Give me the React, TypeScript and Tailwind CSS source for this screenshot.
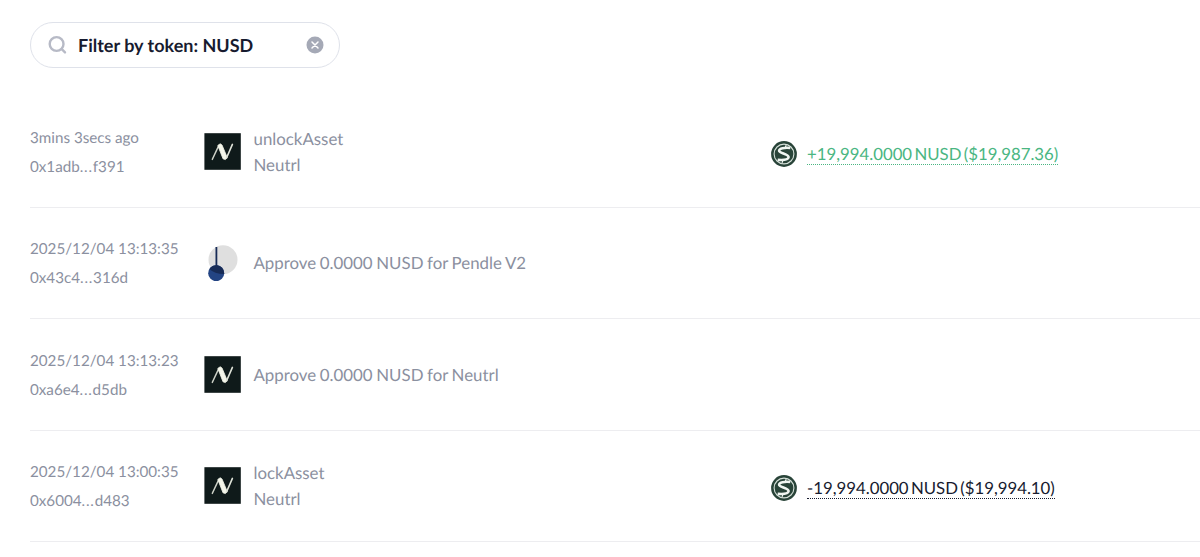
import type { ReactNode } from "react";

function NeutrlIcon() {
  return (
    <svg className="block size-[37px]" viewBox="0 0 37 37">
      <rect x="0.4" y="0.2" width="36.4" height="36.6" fill="#0f1a1a" />
      <path d="M8.3 26.4 L14.4 13.4" fill="none" stroke="#cfd3c9" strokeWidth="1.4" strokeLinecap="round" />
      <path d="M13.8 12.4 L16.2 10.8 L18 12 L23.2 24.4 L21.4 26.6 L19 25.8 Z" fill="#f4f6ea" stroke="#f4f6ea" strokeWidth="0.8" strokeLinejoin="round" />
      <path d="M22.5 25 L28.4 11.4" fill="none" stroke="#dfe3d8" strokeWidth="1.6" strokeLinecap="round" />
    </svg>
  );
}

function PendleIcon() {
  return (
    <svg className="block size-[37px]" viewBox="0 0 37 37">
      <circle cx="19" cy="15.7" r="14.5" fill="#dfdfdf" />
      <circle cx="12.2" cy="29.2" r="8" fill="#234483" />
      <path d="M4.7 26.4 A8 8 0 0 1 20.2 29.2 L20.1 30 Q10.5 30 5.4 24.9 Z" fill="#172b56" />
      <path d="M12.4 3v20" stroke="#172b56" strokeWidth="1.8" />
    </svg>
  );
}

function TokenIcon() {
  return (
    <svg className="block size-[26px] shrink-0" viewBox="0 0 26 26">
      <circle cx="13" cy="13" r="12.9" fill="#294439" />
      <circle cx="13" cy="13" r="9.9" fill="none" stroke="#d5e0d9" strokeWidth="1.1" />
      <path d="M19.3 7 C13.5 6.4 8.2 7.4 8.1 9.8 C8 12.3 17.9 13 17.6 16.2 C17.3 18.8 12.6 19.3 6.7 18.9" fill="none" stroke="#f1f6f2" strokeWidth="2.6" />
      <path d="M15.2 4.3 L13.9 7.2 M12.2 18.8 L11 21.9" stroke="#f1f6f2" strokeWidth="1.2" />
    </svg>
  );
}

type RowProps = {
  time: string;
  hash: [string, string];
  icon: ReactNode;
  title: string;
  protocol?: string;
  amount?: string;
  incoming?: boolean;
};

function TransactionRow({ time, hash, icon, title, protocol, amount, incoming }: RowProps) {
  return (
    <div className="flex h-[111.5px] border-b border-[#ededf0]">
      <div className="w-[174px] shrink-0 pt-[27.5px] text-[15.2px] leading-[29.2px] text-[#8b90a0]">
        <p>{time}</p>
        <p>
          {hash[0]}
          <span className="tracking-[0.75px]">...</span>
          {hash[1]}
        </p>
      </div>
      <div className="flex w-[567px] shrink-0 items-center gap-[12.5px] text-[16.85px] leading-[26px] [word-spacing:-0.7px] text-[#8b90a0]">
        <div className="shrink-0">{icon}</div>
        <div className="pt-[1px]">
          <p>{title}</p>
          {protocol && <p>{protocol}</p>}
        </div>
      </div>
      {amount && (
        <div className="flex items-center gap-[10px] pt-[5px]">
          <TokenIcon />
          <span
            className={`border-b border-dotted pt-[1px] text-[16.8px] leading-[20px] [word-spacing:-2px] whitespace-nowrap ${
              incoming ? "border-[#4ab682] text-[#4ab682]" : "border-[#171b2f] text-[#171b2f]"
            }`}
          >
            {amount}
          </span>
        </div>
      )}
    </div>
  );
}

export default function App() {
  return (
    <main className="h-[557px] overflow-hidden bg-white pt-[21.5px] pl-[30px] font-[Lato,sans-serif] [text-rendering:geometricPrecision]">
      <div className="flex h-[46px] w-[310px] items-center rounded-full border border-[#dfe2ea] pr-[15px] pl-[17px]">
        <svg className="size-[20px] shrink-0" viewBox="0 0 20 20" fill="none" stroke="#b7bac6" strokeWidth="2.4" strokeLinecap="round">
          <circle cx="8.6" cy="9" r="6.9" />
          <path d="m13.8 14.2 3.2 3.2" />
        </svg>
        <span className="ml-[10px] pt-[1px] text-[18px] font-bold text-[#171b2f]">Filter by token: NUSD</span>
        <svg className="ml-auto size-[18px] shrink-0" viewBox="0 0 18 18">
          <circle cx="9" cy="9" r="8.5" fill="#a5a9b6" />
          <path d="m6 6 6 6M12 6l-6 6" stroke="white" strokeWidth="1.5" strokeLinecap="round" />
        </svg>
      </div>
      <div className="pt-[28.5px]">
        <TransactionRow time="3mins 3secs ago" hash={["0x1adb", "f391"]} icon={<NeutrlIcon />} title="unlockAsset" protocol="Neutrl" amount="+19,994.0000 NUSD ($19,987.36)" incoming />
        <TransactionRow time="2025/12/04 13:13:35" hash={["0x43c4", "316d"]} icon={<PendleIcon />} title="Approve 0.0000 NUSD for Pendle V2" />
        <TransactionRow time="2025/12/04 13:13:23" hash={["0xa6e4", "d5db"]} icon={<NeutrlIcon />} title="Approve 0.0000 NUSD for Neutrl" />
        <TransactionRow time="2025/12/04 13:00:35" hash={["0x6004", "d483"]} icon={<NeutrlIcon />} title="lockAsset" protocol="Neutrl" amount="-19,994.0000 NUSD ($19,994.10)" />
      </div>
    </main>
  );
}
